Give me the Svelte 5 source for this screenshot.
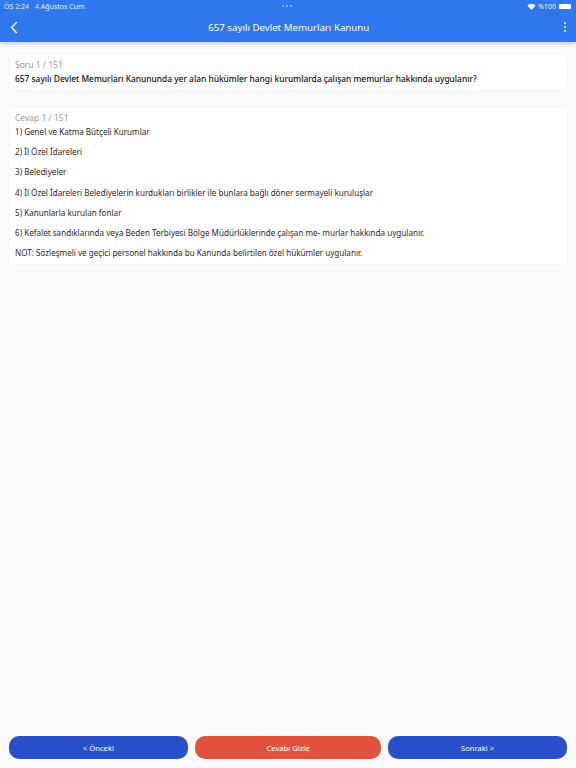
<script lang="ts">
	const items = [
		'1) Genel ve Katma Bütçeli Kurumlar',
		'2) İl Özel İdareleri',
		'3) Belediyeler',
		'4) İl Özel İdareleri Belediyelerin kurdukları birlikler ile bunlara bağlı döner sermayeli kuruluşlar',
		'5) Kanunlarla kurulan fonlar',
		'6) Kefalet sandıklarında veya Beden Terbiyesi Bölge Müdürlüklerinde çalışan me- murlar hakkında uygulanır.',
		'NOT: Sözleşmeli ve geçici personel hakkında bu Kanunda belirtilen özel hükümler uygulanır.'
	];
</script>

<div class="page">
	<header class="header">
		<div class="status">
			<span class="time">ÖS 2:24</span>
			<span class="date">4 Ağustos Cum</span>
			<span class="dots"><i></i><i></i><i></i></span>
			<span class="status-right">
				<svg class="wifi" viewBox="0 0 16 12" width="9" height="7">
					<path d="M8 12 L0.5 4 A11 11 0 0 1 15.5 4 Z" fill="white" />
				</svg>
				<span>%100</span>
				<span class="battery"></span>
			</span>
		</div>
		<div class="toolbar">
			<svg class="back" viewBox="0 0 8 14" width="8" height="13">
				<path d="M7 1 L1.5 7 L7 13" fill="none" stroke="white" stroke-width="1.6" />
			</svg>
			<h1 class="title">657 sayılı Devlet Memurları Kanunu</h1>
			<span class="menu"><i></i><i></i><i></i></span>
		</div>
	</header>

	<main class="content">
		<section class="card question">
			<div class="caption">Soru 1 / 151</div>
			<div class="question-text">657 sayılı Devlet Memurları Kanununda yer alan hükümler hangi kurumlarda çalışan memurlar hakkında uygulanır?</div>
		</section>

		<section class="card answer">
			<div class="caption">Cevap 1 / 151</div>
			<div class="items">
				{#each items as item}
					<p class="item">{item}</p>
				{/each}
			</div>
		</section>
	</main>

	<footer class="actions">
		<button class="btn blue">&lt; Önceki</button>
		<button class="btn red">Cevabı Gizle</button>
		<button class="btn blue">Sonraki &gt;</button>
	</footer>
</div>

<style>
	:global(body) {
		margin: 0;
		background: #fbfbfd;
	}

	.page {
		height: 768px;
		display: flex;
		flex-direction: column;
		font-family: 'Noto Sans', 'Open Sans', sans-serif;
		color: #1c1c1c;
	}

	.header {
		background: #2f78ee;
		color: white;
		height: 42px;
		box-shadow: 0 1px 5px rgba(40, 90, 180, 0.35);
	}

	.status {
		height: 12px;
		padding: 0 5px 0 4px;
		display: flex;
		align-items: center;
		font-size: 7px;
		position: relative;
		color: #e6efff;
	}

	.date {
		margin-left: 6px;
	}

	.dots {
		position: absolute;
		left: 282px;
		top: 5px;
		display: flex;
		gap: 2px;
	}

	.dots i {
		width: 2px;
		height: 2px;
		border-radius: 50%;
		background: #a9c8fa;
	}

	.status-right {
		margin-left: auto;
		display: flex;
		align-items: center;
		gap: 2px;
	}

	.battery {
		width: 12px;
		height: 5px;
		border-radius: 1px;
		background: white;
		margin-left: 1px;
	}

	.toolbar {
		height: 30px;
		display: flex;
		align-items: center;
		padding: 0 10px;
	}

	.title {
		flex: 1;
		margin: 0;
		text-align: center;
		font-size: 9.7px;
		font-weight: 400;
		padding-right: 4px;
	}

	.menu {
		display: flex;
		flex-direction: column;
		gap: 1.5px;
	}

	.menu i {
		width: 2.5px;
		height: 2.5px;
		border-radius: 50%;
		background: white;
	}

	.content {
		flex: 1;
		padding: 12px 10px 0;
		display: flex;
		flex-direction: column;
		gap: 18px;
	}

	.card {
		background: white;
		border-radius: 3px;
		padding: 5px 5px;
		box-shadow: 0 0 3px rgba(120, 120, 140, 0.07);
		box-sizing: border-box;
	}

	.caption {
		font-size: 8.5px;
		line-height: 11px;
		color: #9a9a9a;
	}

	.question {
		height: 36px;
	}

	.question-text {
		font-size: 8.4px;
		font-weight: 500;
		line-height: 14px;
		margin-top: 2px;
		color: #111;
	}

	.answer {
		height: 156px;
		padding-top: 4px;
	}

	.items {
		margin-top: 3px;
	}

	.item {
		margin: 0 0 8.2px;
		font-size: 8.1px;
		line-height: 12px;
		color: #2a2a2a;
	}

	.actions {
		display: flex;
		gap: 7px;
		padding: 0 9px 9px;
	}

	.btn {
		flex: 1;
		height: 23px;
		border: none;
		border-radius: 10px;
		color: white;
		font-family: inherit;
		font-size: 7.6px;
		padding: 0;
	}

	.blue {
		background: #2a4fca;
	}

	.red {
		background: #e2533d;
		flex: 1.04;
	}
</style>
